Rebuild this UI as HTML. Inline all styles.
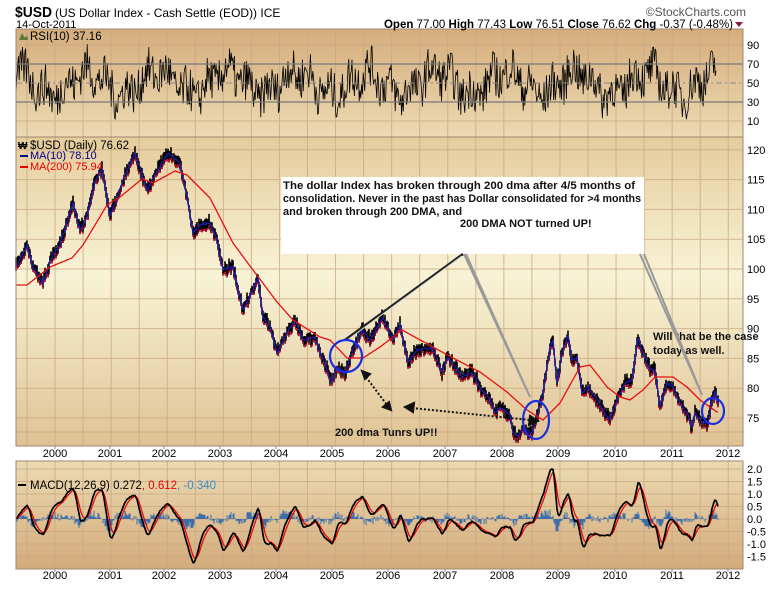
<!DOCTYPE html><html><head><meta charset="utf-8"><style>
body{margin:0;width:780px;height:586px;background:#fff;overflow:hidden;font-family:"Liberation Sans",Arial,sans-serif}
</style></head><body>
<svg id="s" width="780" height="586" xmlns="http://www.w3.org/2000/svg" font-family="Liberation Sans, Arial, sans-serif">
<defs>
<linearGradient id="g1" x1="0" y1="0" x2="0" y2="1"><stop offset="0" stop-color="#d5ad7d"/><stop offset="1" stop-color="#ecdab2"/></linearGradient>
<linearGradient id="g2" x1="0" y1="0" x2="0" y2="1"><stop offset="0" stop-color="#e5cc9c"/><stop offset="0.45" stop-color="#f8f3d6"/><stop offset="1" stop-color="#dfc293"/></linearGradient>
<linearGradient id="g3" x1="0" y1="0" x2="0" y2="1"><stop offset="0" stop-color="#ecdab2"/><stop offset="1" stop-color="#d3ab7b"/></linearGradient>
<clipPath id="cm"><rect x="16" y="461" width="727" height="108"/></clipPath>
<clipPath id="cr"><rect x="16" y="29" width="727" height="108"/></clipPath>
</defs>
<rect x="16" y="29" width="727" height="108" fill="url(#g1)"/>
<rect x="16" y="137" width="727" height="309" fill="url(#g2)"/>
<rect x="16" y="461" width="727" height="108" fill="url(#g3)"/>
<g id="grid" stroke="#c9a985" stroke-width="1" opacity="0.8"></g>
<g id="data"></g>
<rect x="16" y="29" width="727" height="108" fill="none" stroke="#a08670"/>
<rect x="16" y="137" width="727" height="309" fill="none" stroke="#a08670"/>
<rect x="16" y="461" width="727" height="108" fill="none" stroke="#a08670"/>
<line x1="16" y1="64" x2="743" y2="64" stroke="#777" stroke-width="1.2"/>
<line x1="16" y1="102" x2="743" y2="102" stroke="#777" stroke-width="1.2"/>
<line x1="16" y1="83" x2="743" y2="83" stroke="#888" stroke-dasharray="6,3,2,3"/>
<text x="15" y="17" font-size="15" font-weight="bold" textLength="37" lengthAdjust="spacingAndGlyphs">$USD</text>
<text x="55" y="17" font-size="12">(US Dollar Index - Cash Settle (EOD)) ICE</text>
<text x="16" y="28" font-size="11">14-Oct-2011</text>
<text x="746" y="16" font-size="12" fill="#555" text-anchor="end">©StockCharts.com</text>
<text x="733" y="28" font-size="11.5" text-anchor="end"><tspan font-weight="bold">Open</tspan> 77.00 <tspan font-weight="bold">High</tspan> 77.43 <tspan font-weight="bold">Low</tspan> 76.51 <tspan font-weight="bold">Close</tspan> 76.62 <tspan font-weight="bold">Chg</tspan> -0.37 (-0.48%)</text>
<path d="M735 22 L743 22 L739 27Z" fill="#8b1a3a"/>
<path d="M19 40 L22 33 L25 38 L27 35 L28 40Z" fill="#5a7a3a"/>
<text x="30" y="40" font-size="11.5">RSI(10) 37.16</text>
<text x="30" y="149" font-size="11.5">$USD (Daily) 76.62</text>
<text x="18" y="149" font-size="10" font-weight="bold">₩</text>
<rect x="20" y="155" width="8" height="2" fill="#00008b"/><text x="30" y="159" font-size="11" fill="#00008b">MA(10) 78.10</text>
<rect x="20" y="166" width="8" height="2" fill="#e00"/><text x="30" y="170" font-size="11" fill="#e00">MA(200) 75.94</text>
<g font-size="11" id="ax"></g>
<rect x="281" y="177" width="363" height="77" fill="#fff"/>
<g font-size="11" font-weight="bold" fill="#111">
<text x="283" y="189" textLength="352" lengthAdjust="spacingAndGlyphs">The dollar Index has broken through 200 dma after 4/5 months of</text>
<text x="283" y="202" textLength="358" lengthAdjust="spacingAndGlyphs">consolidation. Never in the past has Dollar consolidated for &gt;4 months</text>
<text x="283" y="215">and broken through 200 DMA, and</text>
<text x="460" y="227">200 DMA NOT turned UP!</text>
<text x="335" y="436">200 dma Tunrs UP!!</text>
<text x="653" y="340">Will that be the case</text>
<text x="653" y="354">today as well.</text>
</g>
<line x1="463" y1="254" x2="345" y2="340" stroke="#222" stroke-width="2.5"/>
<line x1="462" y1="256" x2="346" y2="341" stroke="#ddd" stroke-width="1"/>
<path d="M464 254 L530 397 L466 254" fill="none" stroke="#999" stroke-width="2"/>
<path d="M640 254 L702 395 L644 254" fill="none" stroke="#999" stroke-width="2"/>
<ellipse cx="346" cy="356" rx="16" ry="16" fill="none" stroke="#1a2ee0" stroke-width="2.2"/>
<ellipse cx="536" cy="420" rx="13" ry="19" fill="none" stroke="#1a2ee0" stroke-width="2.2"/>
<ellipse cx="713" cy="411" rx="11" ry="13" fill="none" stroke="#1a2ee0" stroke-width="2.2"/>
<line x1="366" y1="377" x2="387" y2="405" stroke="#111" stroke-width="2" stroke-dasharray="2,2"/>
<path d="M362 371 L370 374 L365 379Z M391 410 L383 407 L389 402Z" fill="#111" stroke="#111" stroke-width="2"/>
<line x1="412" y1="408" x2="530" y2="420" stroke="#111" stroke-width="2" stroke-dasharray="2,2"/>
<path d="M405 407 L414 403 L413 412Z M538 421 L529 425 L530 416Z" fill="#111" stroke="#111" stroke-width="2"/>
<g id="mleg"><rect x="18" y="484" width="8" height="2" fill="#000"/>
<text x="30" y="489" font-size="11.5">MACD(12,26,9) 0.272<tspan fill="#e00">, 0.612</tspan><tspan fill="#3a8ad0">, -0.340</tspan></text></g>
</svg>
<script>
var NS="http://www.w3.org/2000/svg";
function el(t,a,p){var e=document.createElementNS(NS,t);for(var k in a)e.setAttribute(k,a[k]);(p||document.getElementById('data')).appendChild(e);return e;}
var seed=7;function r(){seed=(seed*16807)%2147483647;return seed/2147483647;}
var grid=document.getElementById('grid'),ax=document.getElementById('ax');
for(var i=0;i<27;i++){var x=27+i*28.05;if(x>742)break;
 [[29,137],[137,446],[461,569]].forEach(function(p){el('line',{x1:x,y1:p[0],x2:x,y2:p[1]},grid);});}
var yrs=[55,110,164,220,276,332,388,445,502,558,615,672,728];
yrs.forEach(function(x,i){[457,579].forEach(function(y){var t=el('text',{x:x,y:y,'text-anchor':'middle'},ax);t.textContent=2000+i;});
 el('line',{x1:x,y1:446,x2:x,y2:449,stroke:'#888'},ax);el('line',{x1:x,y1:569,x2:x,y2:572,stroke:'#888'},ax);});
[45,121].forEach(function(y){el('line',{x1:16,y1:y,x2:743,y2:y},grid);});
[90,70,50,30,10].forEach(function(v){var y=83-(v-50)*0.95;var t=el('text',{x:747,y:y+4},ax);t.textContent=v;});
for(var v=75;v<=120;v+=5){var y=418-(v-75)*5.96;el('line',{x1:16,y1:y,x2:743,y2:y},grid);var t=el('text',{x:747,y:y+4},ax);t.textContent=v;}
el('line',{x1:16,y1:432,x2:743,y2:432},grid);
for(var m=-1.5;m<=2.0;m+=0.5){var y=519-m*25;el('line',{x1:16,y1:y,x2:743,y2:y},grid);var t=el('text',{x:747,y:y+4},ax);t.textContent=m.toFixed(1);}
function interp(pts,x){for(var i=0;i<pts.length-1;i++){if(x>=pts[i][0]&&x<=pts[i+1][0]){var f=(x-pts[i][0])/(pts[i+1][0]-pts[i][0]);return pts[i][1]+f*(pts[i+1][1]-pts[i][1]);}}return pts[pts.length-1][1];}
var P=[[16,267],[27,245],[33,267],[43,283],[52,257],[60,245],[73,203],[80,230],[87,217],[95,182],[102,168],[110,215],[117,198],[125,175],[135,153],[147,190],[157,172],[168,153],[180,163],[187,197],[193,233],[200,225],[210,223],[217,240],[223,270],[233,267],[243,310],[253,290],[258,277],[263,317],[270,327],[277,353],[287,333],[295,320],[303,340],[315,337],[323,360],[332,382],[337,367],[345,373],[353,350],[362,330],[370,340],[383,317],[393,340],[400,325],[408,362],[417,350],[433,348],[442,372],[448,357],[462,377],[472,372],[480,387],[490,400],[495,413],[500,407],[510,415],[513,433],[518,437],[523,428],[532,433],[537,417],[543,393],[547,367],[550,347],[553,340],[557,383],[562,353],[568,335],[572,360],[577,357],[582,393],[588,387],[597,400],[603,410],[610,420],[617,400],[625,383],[632,380],[638,338],[643,353],[650,370],[655,370],[660,407],[667,383],[673,387],[680,403],[687,413],[692,427],[695,413],[702,422],[708,423],[712,400],[715,392],[718,403]];
var M=[[16,285],[27,285],[50,267],[72,258],[83,245],[107,205],[120,197],[142,179],[153,183],[175,171],[187,175],[210,198],[233,243],[253,270],[277,302],[293,320],[320,337],[330,340],[347,358],[363,358],[380,347],[402,330],[433,347],[453,358],[480,372],[507,392],[527,410],[543,420],[560,403],[580,367],[590,365],[607,387],[620,397],[630,400],[643,390],[655,377],[673,377],[687,387],[700,400],[717,412]];
var bars='',red='',blue='';
for(var x=16;x<=718;x+=1){var y=interp(P,x)+(r()-0.5)*6;var h=3+r()*4;
 bars+='M'+x+' '+(y-h).toFixed(1)+'V'+(y+h).toFixed(1);red+='M'+(x-0.5)+' '+(y+h-1).toFixed(1)+'h1.5';
 blue+=(x==16?'M':'L')+x+' '+(interp(P,x)+(r()-0.5)*2).toFixed(1);}
el('path',{d:bars,stroke:'#000','stroke-width':1.6,fill:'none'});
el('path',{d:red,stroke:'#e0103a','stroke-width':1.5,fill:'none'});
el('path',{d:blue,stroke:'#1a1ab0','stroke-width':1.3,fill:'none'});
var md='';for(var x=16;x<=718;x++){md+=(x==16?'M':'L')+x+' '+interp(M,x).toFixed(1);}
el('path',{d:md,stroke:'#e81010','stroke-width':1.3,fill:'none'});
var rs='';for(var x=16;x<=716;x+=0.8){var v=50+(r()-0.5)*45+Math.sin(x*0.09)*12+Math.sin(x*0.31)*8;v=Math.max(10,Math.min(92,v));rs+=(rs?'L':'M')+x.toFixed(1)+' '+(83-(v-50)*0.95).toFixed(1);}
el('path',{d:rs,stroke:'#000','stroke-width':0.8,fill:'none','clip-path':'url(#cr)'});
var ps=[];for(var x=16;x<=718;x++)ps.push(-interp(P,x)/5.96+(r()-0.5)*0.6);
var e1=ps[0],e2=ps[0],sg=0,ms=[],ss=[],mx=0;
for(var i=0;i<ps.length;i++){e1+=(ps[i]-e1)*0.3;e2+=(ps[i]-e2)*0.11;var m=e1-e2;sg+=(m-sg)*0.3;ms.push(m);ss.push(sg);mx=Math.max(mx,Math.abs(m));}
var k=2.0/mx,mac='',sig='',hist='';
for(var i=0;i<ms.length;i++){var x=16+i,m=ms[i]*k,s=ss[i]*k,hv=(m-s)*0.8+(r()-0.5)*0.3;hv=Math.max(-0.5,Math.min(0.5,hv));
 mac+=(i?'L':'M')+x+' '+(519-m*25).toFixed(1);sig+=(i?'L':'M')+x+' '+(519-s*25).toFixed(1);
 hist+='M'+x+' 519V'+(519-hv*25).toFixed(1);}
var gm=el('g',{'clip-path':'url(#cm)'});
el('path',{d:hist,stroke:'#3c6eaa','stroke-width':1,fill:'none'},gm);
el('path',{d:sig,stroke:'#e00','stroke-width':1.2,fill:'none'},gm);
el('path',{d:mac,stroke:'#000','stroke-width':1.7,fill:'none'},gm);
</script>
</body></html>
